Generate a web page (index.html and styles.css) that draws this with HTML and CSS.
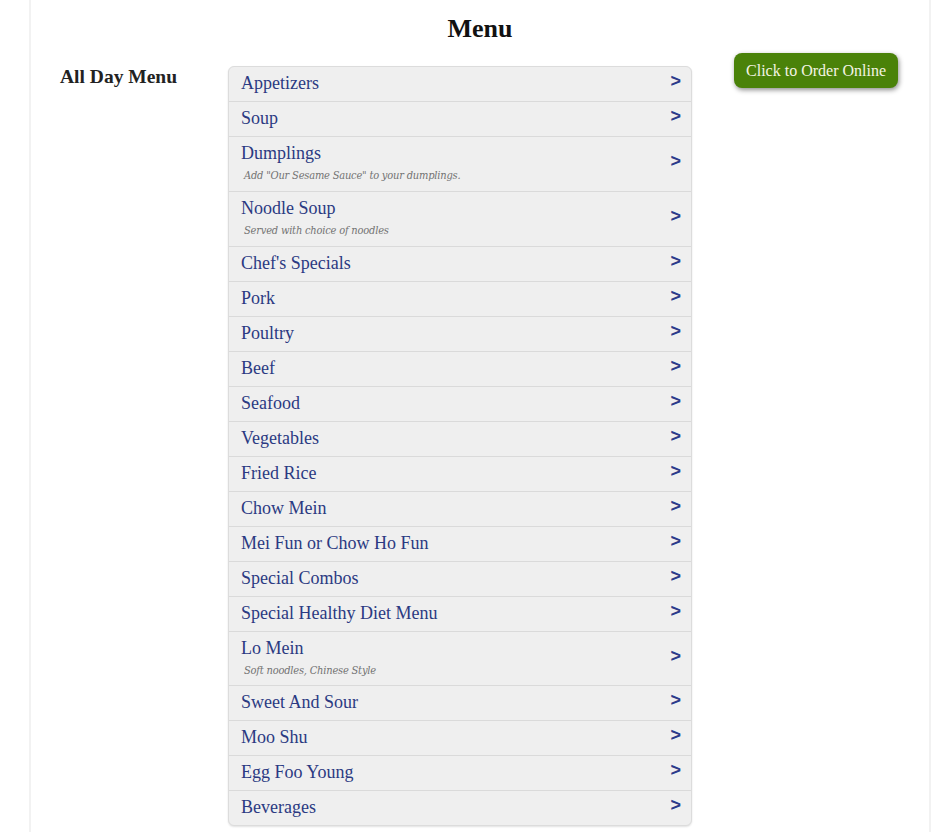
FILE: index.html
```html
<!DOCTYPE html>
<html>
<head>
<meta charset="utf-8">
<link rel="stylesheet" href="styles.css">
</head>
<body>
<div class="page">
  <h1 class="title">Menu</h1>
  <div class="layout">
    <div class="side"><h2 class="side-title">All Day Menu</h2></div>
    <ul class="cats">
      <li class="cat"><div class="cat-text"><span class="cat-name">Appetizers</span></div><span class="arrow">&gt;</span></li>
      <li class="cat"><div class="cat-text"><span class="cat-name">Soup</span></div><span class="arrow">&gt;</span></li>
      <li class="cat"><div class="cat-text"><span class="cat-name">Dumplings</span><span class="cat-desc">Add "Our Sesame Sauce" to your dumplings.</span></div><span class="arrow">&gt;</span></li>
      <li class="cat"><div class="cat-text"><span class="cat-name">Noodle Soup</span><span class="cat-desc">Served with choice of noodles</span></div><span class="arrow">&gt;</span></li>
      <li class="cat"><div class="cat-text"><span class="cat-name">Chef's Specials</span></div><span class="arrow">&gt;</span></li>
      <li class="cat"><div class="cat-text"><span class="cat-name">Pork</span></div><span class="arrow">&gt;</span></li>
      <li class="cat"><div class="cat-text"><span class="cat-name">Poultry</span></div><span class="arrow">&gt;</span></li>
      <li class="cat"><div class="cat-text"><span class="cat-name">Beef</span></div><span class="arrow">&gt;</span></li>
      <li class="cat"><div class="cat-text"><span class="cat-name">Seafood</span></div><span class="arrow">&gt;</span></li>
      <li class="cat"><div class="cat-text"><span class="cat-name">Vegetables</span></div><span class="arrow">&gt;</span></li>
      <li class="cat"><div class="cat-text"><span class="cat-name">Fried Rice</span></div><span class="arrow">&gt;</span></li>
      <li class="cat"><div class="cat-text"><span class="cat-name">Chow Mein</span></div><span class="arrow">&gt;</span></li>
      <li class="cat"><div class="cat-text"><span class="cat-name">Mei Fun or Chow Ho Fun</span></div><span class="arrow">&gt;</span></li>
      <li class="cat"><div class="cat-text"><span class="cat-name">Special Combos</span></div><span class="arrow">&gt;</span></li>
      <li class="cat"><div class="cat-text"><span class="cat-name">Special Healthy Diet Menu</span></div><span class="arrow">&gt;</span></li>
      <li class="cat cat-tight"><div class="cat-text"><span class="cat-name">Lo Mein</span><span class="cat-desc">Soft noodles, Chinese Style</span></div><span class="arrow">&gt;</span></li>
      <li class="cat"><div class="cat-text"><span class="cat-name">Sweet And Sour</span></div><span class="arrow">&gt;</span></li>
      <li class="cat"><div class="cat-text"><span class="cat-name">Moo Shu</span></div><span class="arrow">&gt;</span></li>
      <li class="cat"><div class="cat-text"><span class="cat-name">Egg Foo Young</span></div><span class="arrow">&gt;</span></li>
      <li class="cat"><div class="cat-text"><span class="cat-name">Beverages</span></div><span class="arrow">&gt;</span></li>
    </ul>
    <div class="aside">
      <a class="order-btn" href="#">Click to Order Online</a>
    </div>
  </div>
</div>
</body>
</html>
```

FILE: styles.css
```css
html, body {
  margin: 0;
  padding: 0;
  background: #fff;
}
body {
  font-family: "Liberation Serif", "Times New Roman", serif;
  overflow: hidden;
}
.page {
  box-sizing: border-box;
  width: 902px;
  min-height: 832px;
  margin-left: 29px;
  border-left: 2px solid #f2f2f2;
  border-right: 2px solid #f2f2f2;
  padding: 0 0 0 29px;
}
.title {
  margin: 0 0 0 -29px;
  padding-top: 13px;
  height: 40px;
  font-size: 26px;
  line-height: 32px;
  font-weight: bold;
  text-align: center;
  color: #111;
}
.layout {
  display: grid;
  grid-template-columns: 168px 464px 1fr;
  margin-top: 13px;
}
.side-title {
  margin: 0;
  font-size: 19.5px;
  line-height: 22px;
  font-weight: bold;
  color: #222;
}
.cats {
  list-style: none;
  margin: 0;
  padding: 0;
  background: #efefef;
  border: 1px solid #dcdcdc;
  border-radius: 6px;
  box-shadow: 0 1px 2px rgba(0,0,0,0.12);
}
.cat {
  display: flex;
  align-items: center;
  justify-content: space-between;
  padding: 6px 10px 7px 12px;
  border-top: 1px solid #dadada;
}
.cat:first-child {
  border-top: none;
}
.cat-tight {
  padding-bottom: 6px;
}
.cat-text {
  display: flex;
  flex-direction: column;
}
.cat-name {
  font-size: 18px;
  line-height: 21px;
  color: #2b3a82;
}
.cat-desc {
  font-family: "DejaVu Serif", serif;
  font-stretch: condensed;
  font-style: italic;
  font-size: 11px;
  line-height: 16px;
  margin-top: 4px;
  color: #737373;
  padding-left: 3px;
  letter-spacing: -0.2px;
}
.arrow {
  font-family: "Liberation Sans", Arial, sans-serif;
  font-weight: bold;
  font-size: 18px;
  line-height: 20px;
  color: #2b3a8a;
  transform: translateY(-3px);
}
.aside {
  display: flex;
  justify-content: flex-end;
  align-items: flex-start;
  padding-right: 31px;
}
.order-btn {
  margin-top: -13px;
  display: block;
  background: #4a8209;
  color: #f4f4e4;
  text-decoration: none;
  font-size: 16px;
  line-height: 35px;
  padding: 0 12px;
  border-radius: 8px;
  box-shadow: 1px 2px 5px rgba(0,0,0,0.45);
}
```
